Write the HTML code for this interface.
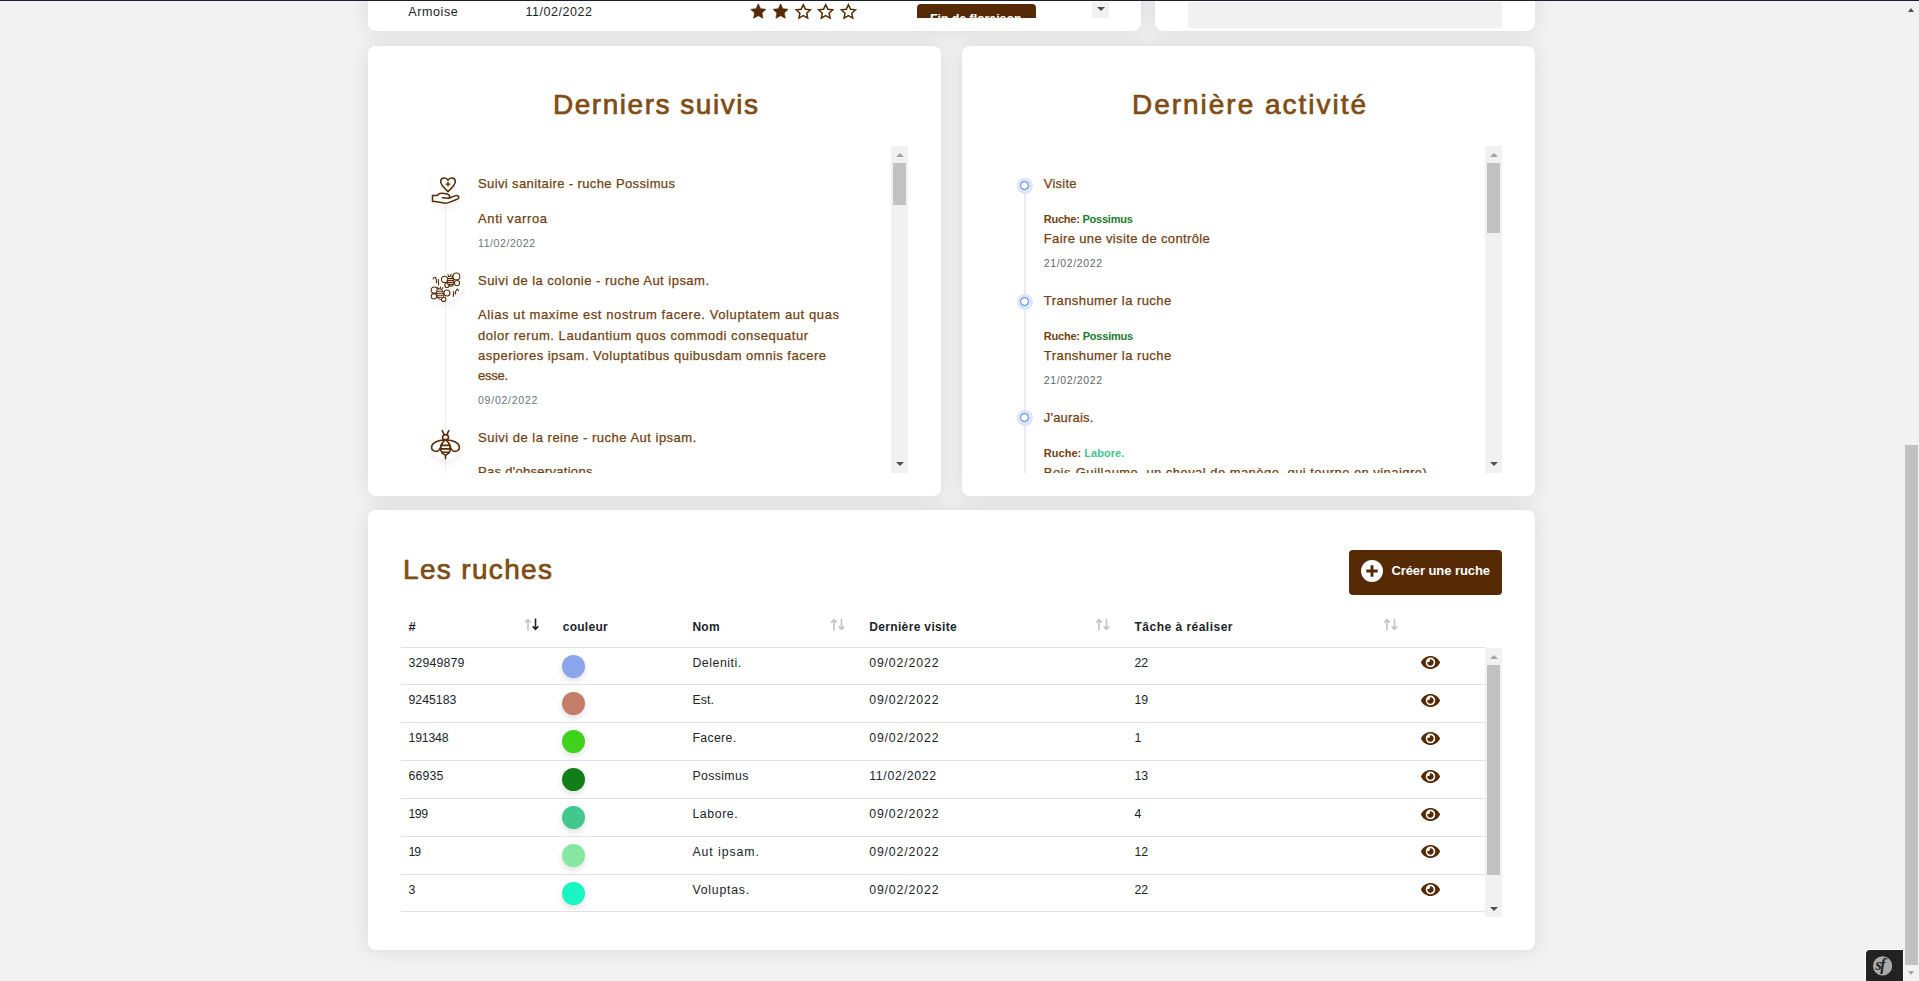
<!DOCTYPE html>
<html lang="fr">
<head>
<meta charset="utf-8">
<title>Tableau de bord - ruches</title>
<style>
html,body{margin:0;padding:0}
body{width:1919px;height:981px;overflow:hidden;position:relative;background:#f2f2f2;font-family:"Liberation Sans",sans-serif}
.a{position:absolute}
.t{position:absolute;white-space:nowrap}
.card{position:absolute;background:#fff;border-radius:8px;box-shadow:0 0 20px rgba(0,0,0,0.10)}
.clip{position:absolute;left:0;top:0;width:1919px;height:981px}
.sb{position:absolute;background:#f1f1f1}
.thumb{position:absolute;background:#c1c1c1}
.up{position:absolute;width:0;height:0;border-left:4px solid transparent;border-right:4px solid transparent;border-bottom:4px solid #a3a3a3}
.dn{position:absolute;width:0;height:0;border-left:4px solid transparent;border-right:4px solid transparent;border-top:4px solid #505050}
.ico{position:absolute;width:30px;height:30px;border-radius:50%;background:#fff;box-shadow:0 3px 8px rgba(0,0,0,0.07)}
.dot{position:absolute;width:16px;height:16px;border-radius:50%;background:#dce6fb}
.dot i{position:absolute;left:3px;top:3px;width:7px;height:7px;border-radius:50%;border:1.5px solid #3b7cf4;background:#fff}
.rb{position:absolute;left:401px;width:1084px;height:1px;background:#dee2e6}
.cc{position:absolute;left:562px;width:23px;height:23px;border-radius:50%;box-shadow:0 3px 6px rgba(0,0,0,0.13)}
.eye{position:absolute;left:1421px;width:19px;height:13px}
.sort{position:absolute;width:16px;height:13px}
</style>
</head>
<body>
<!-- top partial cards -->
<div class="card" style="left:368px;top:-200px;width:773px;height:231px"></div>
<div class="card" style="left:1155px;top:-200px;width:380px;height:231px"></div>
<div class="a" style="left:1188px;top:2px;width:314px;height:26px;background:#f1f1f1"></div>

<!-- stars -->
<svg class="a" style="left:740px;top:0px" width="125" height="24" viewBox="740 0 125 24">
<path d="M758.30,3.80 L760.59,8.64 L765.91,9.33 L762.01,13.01 L763.00,18.27 L758.30,15.70 L753.60,18.27 L754.59,13.01 L750.69,9.33 L756.01,8.64Z" fill="#562a04" stroke="#562a04" stroke-width="0.6" stroke-linejoin="round"/>
<path d="M780.60,3.80 L782.89,8.64 L788.21,9.33 L784.31,13.01 L785.30,18.27 L780.60,15.70 L775.90,18.27 L776.89,13.01 L772.99,9.33 L778.31,8.64Z" fill="#562a04" stroke="#562a04" stroke-width="0.6" stroke-linejoin="round"/>
<path d="M803.30,4.70 L805.42,9.19 L810.34,9.81 L806.72,13.21 L807.65,18.09 L803.30,15.70 L798.95,18.09 L799.88,13.21 L796.26,9.81 L801.18,9.19Z" fill="none" stroke="#562a04" stroke-width="1.5" stroke-linejoin="miter"/>
<path d="M825.70,4.70 L827.82,9.19 L832.74,9.81 L829.12,13.21 L830.05,18.09 L825.70,15.70 L821.35,18.09 L822.28,13.21 L818.66,9.81 L823.58,9.19Z" fill="none" stroke="#562a04" stroke-width="1.5" stroke-linejoin="miter"/>
<path d="M848.40,4.70 L850.52,9.19 L855.44,9.81 L851.82,13.21 L852.75,18.09 L848.40,15.70 L844.05,18.09 L844.98,13.21 L841.36,9.81 L846.28,9.19Z" fill="none" stroke="#562a04" stroke-width="1.5" stroke-linejoin="miter"/>
</svg>

<!-- Fin de floraison button (clipped) -->
<div class="clip" style="clip-path:inset(0 0 963px 0)">
  <div class="a" style="left:917px;top:4px;width:119px;height:30px;background:#562a04;border-radius:4px"></div>
  <div class="t" style="left:930px;top:13px;font-size:12.5px;line-height:13px;font-weight:bold;color:#fff;letter-spacing:-0.1px">Fin de floraison</div>
</div>
<div class="sb" style="left:1092px;top:2px;width:17px;height:16px"></div>
<div class="dn" style="left:1096.5px;top:7px"></div>

<!-- Derniers suivis card -->
<div class="card" style="left:368px;top:46px;width:573px;height:450px"></div>
<div class="clip" style="clip-path:inset(146px 1011px 508px 368px)">
  <div class="a" style="left:445px;top:190px;width:1px;height:290px;background:#eceef1"></div>
  <div class="ico" style="left:430.5px;top:175px"></div>
  <div class="ico" style="left:430.5px;top:272px"></div>
  <div class="ico" style="left:430.5px;top:430px"></div>
  <svg class="a" style="left:420px;top:165px" width="55" height="50" viewBox="0 0 55 50" fill="none" stroke="#5a2c08" stroke-width="1.5" stroke-linejoin="round" stroke-linecap="round">
  <path d="M28 15.3C26.6 12.2 21.2 11.9 20.6 16.3C20.3 19.5 24 23 28 26.6C32 23 35.7 19.5 35.4 16.3C34.8 11.9 29.4 12.2 28 15.3Z"/>
  <path d="M28 17.1V21.1M26 19.1H30" stroke-width="1.4"/>
  <path d="M12.5 30.5H17.2C18.4 29 19.6 28.3 21.5 28.3C23.6 28.3 27.6 28.7 29.3 30.5C30.1 31.4 29.6 33 28.6 33.2L22.3 32.8"/>
  <path d="M28.6 33.2L35.6 30.6C37.4 30 38.9 31.4 38.8 32.7C38.6 33.9 37.2 34.5 35.8 34.8L28.7 37.6C27.1 38.2 25.6 38.4 24 38.1L15.4 36.4H12.5V30.5"/>
</svg>
<svg class="a" style="left:420px;top:262px" width="55" height="50" viewBox="0 0 55 50" fill="#fff" stroke="#5a2c08" stroke-width="1.05" stroke-linejoin="round" stroke-linecap="round">
  <circle cx="24.6" cy="17.4" r="3.1"/>
  <circle cx="27" cy="23.2" r="2.3"/>
  <circle cx="36.4" cy="14.4" r="3.4"/>
  <circle cx="37" cy="21.1" r="2.6"/>
  <ellipse cx="30.5" cy="19.3" rx="3.2" ry="5.1" transform="rotate(-12 30.5 19.3)"/>
  <path d="M27.8 16.6H33.4M27.4 18.6H33.6M27.5 20.6H33.5M28 22.6H33" fill="none"/>
  <path d="M28.6 14.4L27.9 12.4M30.6 14L31 12M32.3 14.6L33.3 12.8" fill="none"/>
  <circle cx="14.3" cy="28" r="3.1"/>
  <circle cx="14" cy="34.3" r="2.7"/>
  <circle cx="27" cy="30.9" r="3"/>
  <circle cx="23.6" cy="37.2" r="2.3"/>
  <ellipse cx="20" cy="32" rx="3.4" ry="5.3" transform="rotate(-12 20 32)"/>
  <path d="M17.2 29.2H23M16.7 31.2H23.3M16.8 33.2H23.2M17.3 35.2H22.7" fill="none"/>
  <path d="M18.2 27L17.6 25.2M20.2 26.7L20.5 24.9M21.9 27.2L22.9 25.6" fill="none"/>
  <path d="M13.1 16.9C13.4 15.3 15.4 14.8 16 16.4C16.4 17.6 16.3 19.4 16.5 20.6" fill="none" stroke-width="1.15"/>
  <path d="M18.4 17.6L18.6 23" fill="none" stroke-width="1.15"/>
  <path d="M33.3 34.4L33.7 29.6M35.3 32C35.6 30 36.2 27.4 37 27.2C37.6 27.1 38.2 28 38.6 28.7" fill="none" stroke-width="1.15"/>
</svg>
<svg class="a" style="left:420px;top:420px" width="55" height="50" viewBox="0 0 55 50" fill="none" stroke="#5a2c08" stroke-width="1.6" stroke-linejoin="round" stroke-linecap="round">
  <path d="M22.2 10.6L24.3 14.9M28.8 10.6L26.7 14.9"/>
  <ellipse cx="25.5" cy="17.3" rx="3" ry="2.6"/>
  <path d="M25.5 19.9C22 22.3 20.4 26 20.6 28.9C20.9 32 23.4 34.4 25.5 35C27.6 34.4 30.1 32 30.4 28.9C30.6 26 29 22.3 25.5 19.9Z"/>
  <path d="M22.6 25.4H28.4M20.8 28.9H30.2M21.9 32.3H29.1"/>
  <path d="M25.5 35V38.7"/>
  <path d="M24 20C19 20.2 12.2 22.3 11.6 27C11.3 30.4 14.8 32 17.8 31C19.8 30.2 21.2 26.5 22.5 23"/>
  <path d="M27 20C32 20.2 38.8 22.3 39.4 27C39.7 30.4 36.2 32 33.2 31C31.2 30.2 29.8 26.5 28.5 23"/>
</svg>

  <div class="t" style="left:478.00px;top:176.99px;font-size:13px;line-height:13px;font-weight:normal;color:#724213;letter-spacing:0.388px;-webkit-text-stroke:0.25px #724213">Suivi sanitaire - ruche Possimus</div>
<div class="t" style="left:478.00px;top:211.99px;font-size:13px;line-height:13px;font-weight:normal;color:#724213;letter-spacing:0.613px;-webkit-text-stroke:0.25px #724213">Anti varroa</div>
<div class="t" style="left:478.00px;top:237.71px;font-size:10.5px;line-height:10.5px;font-weight:normal;color:#6c757d;letter-spacing:0.580px;">11/02/2022</div>
<div class="t" style="left:478.00px;top:273.79px;font-size:13px;line-height:13px;font-weight:normal;color:#724213;letter-spacing:0.482px;-webkit-text-stroke:0.25px #724213">Suivi de la colonie - ruche Aut ipsam.</div>
<div class="t" style="left:478.00px;top:307.99px;font-size:13px;line-height:13px;font-weight:normal;color:#724213;letter-spacing:0.597px;-webkit-text-stroke:0.25px #724213">Alias ut maxime est nostrum facere. Voluptatem aut quas</div>
<div class="t" style="left:478.00px;top:328.59px;font-size:13px;line-height:13px;font-weight:normal;color:#724213;letter-spacing:0.533px;-webkit-text-stroke:0.25px #724213">dolor rerum. Laudantium quos commodi consequatur</div>
<div class="t" style="left:478.00px;top:348.99px;font-size:13px;line-height:13px;font-weight:normal;color:#724213;letter-spacing:0.494px;-webkit-text-stroke:0.25px #724213">asperiores ipsam. Voluptatibus quibusdam omnis facere</div>
<div class="t" style="left:478.00px;top:368.99px;font-size:13px;line-height:13px;font-weight:normal;color:#724213;letter-spacing:-0.270px;-webkit-text-stroke:0.25px #724213">esse.</div>
<div class="t" style="left:478.00px;top:395.11px;font-size:10.5px;line-height:10.5px;font-weight:normal;color:#6c757d;letter-spacing:0.760px;">09/02/2022</div>
<div class="t" style="left:478.00px;top:430.89px;font-size:13px;line-height:13px;font-weight:normal;color:#724213;letter-spacing:0.497px;-webkit-text-stroke:0.25px #724213">Suivi de la reine - ruche Aut ipsam.</div>
<div class="t" style="left:478.00px;top:464.99px;font-size:13px;line-height:13px;font-weight:normal;color:#724213;letter-spacing:0.292px;-webkit-text-stroke:0.25px #724213">Pas d'observations</div>
</div>
<div class="sb" style="left:891px;top:146px;width:17px;height:327px"></div>
<div class="thumb" style="left:893px;top:163px;width:13px;height:42px"></div>
<div class="up" style="left:895.5px;top:153px"></div>
<div class="dn" style="left:895.5px;top:462px"></div>

<!-- Derniere activite card -->
<div class="card" style="left:962px;top:46px;width:573px;height:450px"></div>
<div class="clip" style="clip-path:inset(146px 417px 508px 962px)">
  <div class="a" style="left:1024px;top:186px;width:2px;height:300px;background:#e9ecf4"></div>
  <div class="dot" style="left:1017px;top:177.5px"><i></i></div>
  <div class="dot" style="left:1017px;top:294px"><i></i></div>
  <div class="dot" style="left:1017px;top:410px"><i></i></div>
  <div class="t" style="left:1043.80px;top:176.79px;font-size:13px;line-height:13px;font-weight:normal;color:#724213;letter-spacing:0.228px;-webkit-text-stroke:0.25px #724213">Visite</div>
<div class="t" style="left:1043.80px;top:213.69px;font-size:11px;line-height:11px;font-weight:bold;color:#724213;letter-spacing:-0.237px;">Ruche: <span style="color:#1a7d2a">Possimus</span></div>
<div class="t" style="left:1043.80px;top:231.79px;font-size:13px;line-height:13px;font-weight:normal;color:#724213;letter-spacing:0.367px;-webkit-text-stroke:0.25px #724213">Faire une visite de contrôle</div>
<div class="t" style="left:1043.80px;top:257.91px;font-size:10.5px;line-height:10.5px;font-weight:normal;color:#5f666d;letter-spacing:0.626px;">21/02/2022</div>
<div class="t" style="left:1043.80px;top:293.99px;font-size:13px;line-height:13px;font-weight:normal;color:#724213;letter-spacing:0.441px;-webkit-text-stroke:0.25px #724213">Transhumer la ruche</div>
<div class="t" style="left:1043.80px;top:330.89px;font-size:11px;line-height:11px;font-weight:bold;color:#724213;letter-spacing:-0.208px;">Ruche: <span style="color:#1a7d2a">Possimus</span></div>
<div class="t" style="left:1043.80px;top:348.99px;font-size:13px;line-height:13px;font-weight:normal;color:#724213;letter-spacing:0.441px;-webkit-text-stroke:0.25px #724213">Transhumer la ruche</div>
<div class="t" style="left:1043.80px;top:375.11px;font-size:10.5px;line-height:10.5px;font-weight:normal;color:#5f666d;letter-spacing:0.626px;">21/02/2022</div>
<div class="t" style="left:1043.80px;top:410.69px;font-size:13px;line-height:13px;font-weight:normal;color:#724213;letter-spacing:0.198px;-webkit-text-stroke:0.25px #724213">J'aurais.</div>
<div class="t" style="left:1043.80px;top:447.59px;font-size:11px;line-height:11px;font-weight:bold;color:#724213;letter-spacing:0.032px;">Ruche: <span style="color:#41c68b">Labore.</span></div>
<div class="t" style="left:1043.80px;top:465.69px;font-size:13px;line-height:13px;font-weight:normal;color:#724213;letter-spacing:0.453px;-webkit-text-stroke:0.25px #724213">Bois-Guillaume, un cheval de manège, qui tourne en vinaigre)</div>
</div>
<div class="sb" style="left:1485px;top:146px;width:17px;height:327px"></div>
<div class="thumb" style="left:1487px;top:163px;width:13px;height:70px"></div>
<div class="up" style="left:1489.5px;top:153px"></div>
<div class="dn" style="left:1489.5px;top:462px"></div>

<!-- Les ruches card -->
<div class="card" style="left:368px;top:510px;width:1167px;height:440px"></div>
<div class="a" style="left:1349px;top:550px;width:153px;height:45px;background:#562a04;border-radius:4px"></div>
<svg class="a" style="left:1361px;top:560px" width="22" height="22" viewBox="0 0 22 22">
  <circle cx="11" cy="11" r="11" fill="#fff"/>
  <path d="M11 5.3 V16.7 M5.3 11 H16.7" stroke="#562a04" stroke-width="2.9"/>
</svg>
<svg class="sort" style="left:523.5px;top:617.5px" viewBox="0 0 16 13"><path d="M4 12.5V1.8M1.2 4.6L4 1.6L6.8 4.6" stroke="#c2c4c7" stroke-width="1.6" fill="none"/><path d="M11.5 0.5V11.2M8.7 8.4L11.5 11.4L14.3 8.4" stroke="#212529" stroke-width="1.6" fill="none"/></svg>
<svg class="sort" style="left:830px;top:617.5px" viewBox="0 0 16 13"><path d="M4 12.5V1.8M1.2 4.6L4 1.6L6.8 4.6" stroke="#c2c4c7" stroke-width="1.6" fill="none"/><path d="M11.5 0.5V11.2M8.7 8.4L11.5 11.4L14.3 8.4" stroke="#c2c4c7" stroke-width="1.6" fill="none"/></svg>
<svg class="sort" style="left:1094.8px;top:617.5px" viewBox="0 0 16 13"><path d="M4 12.5V1.8M1.2 4.6L4 1.6L6.8 4.6" stroke="#c2c4c7" stroke-width="1.6" fill="none"/><path d="M11.5 0.5V11.2M8.7 8.4L11.5 11.4L14.3 8.4" stroke="#c2c4c7" stroke-width="1.6" fill="none"/></svg>
<svg class="sort" style="left:1382.5px;top:617.5px" viewBox="0 0 16 13"><path d="M4 12.5V1.8M1.2 4.6L4 1.6L6.8 4.6" stroke="#c2c4c7" stroke-width="1.6" fill="none"/><path d="M11.5 0.5V11.2M8.7 8.4L11.5 11.4L14.3 8.4" stroke="#c2c4c7" stroke-width="1.6" fill="none"/></svg>
<svg width="0" height="0" style="position:absolute"><defs><g id="eyeg"><path transform="scale(0.03299 0.03385) translate(0 -64)" fill="#562a04" d="M572.52 241.4C518.29 135.59 410.93 64 288 64S57.68 135.64 3.48 241.41a32.35 32.35 0 0 0 0 29.19C57.710 376.41 165.07 448 288 448s230.320-71.64 284.520-177.41a32.35 32.35 0 0 0 0-29.19zM288 400a144 144 0 1 1 144-144 143.93 143.93 0 0 1-144 144zm0-240a95.31 95.31 0 0 0-25.31 3.79 47.85 47.85 0 0 1-66.9 66.9A95.78 95.78 0 1 0 288 160z"/></g></defs></svg>
<div class="rb" style="top:647px"></div>
<div class="rb" style="top:684.4px"></div>
<div class="cc" style="top:654.5px;background:#8aa5ec"></div>
<svg class="eye" style="top:656.3px" viewBox="0 0 19 13"><use href="#eyeg"/></svg>
<div class="rb" style="top:722.2px"></div>
<div class="cc" style="top:692.3px;background:#c47d68"></div>
<svg class="eye" style="top:694.1px" viewBox="0 0 19 13"><use href="#eyeg"/></svg>
<div class="rb" style="top:760.1px"></div>
<div class="cc" style="top:730.2px;background:#40d21a"></div>
<svg class="eye" style="top:732.0px" viewBox="0 0 19 13"><use href="#eyeg"/></svg>
<div class="rb" style="top:797.9px"></div>
<div class="cc" style="top:768.0px;background:#127e17"></div>
<svg class="eye" style="top:769.8px" viewBox="0 0 19 13"><use href="#eyeg"/></svg>
<div class="rb" style="top:835.7px"></div>
<div class="cc" style="top:805.8px;background:#42c78d"></div>
<svg class="eye" style="top:807.6px" viewBox="0 0 19 13"><use href="#eyeg"/></svg>
<div class="rb" style="top:873.5px"></div>
<div class="cc" style="top:843.6px;background:#86e8a0"></div>
<svg class="eye" style="top:845.4px" viewBox="0 0 19 13"><use href="#eyeg"/></svg>
<div class="rb" style="top:911.4px"></div>
<div class="cc" style="top:881.5px;background:#17f5c3"></div>
<svg class="eye" style="top:883.3px" viewBox="0 0 19 13"><use href="#eyeg"/></svg>
<div class="sb" style="left:1485px;top:648px;width:17px;height:269px"></div>
<div class="thumb" style="left:1487px;top:665px;width:13px;height:210px"></div>
<div class="up" style="left:1489.5px;top:655px"></div>
<div class="dn" style="left:1489.5px;top:907px"></div>

<div class="t" style="left:408.30px;top:5.52px;font-size:12.5px;line-height:12.5px;font-weight:normal;color:#212529;letter-spacing:0.609px;">Armoise</div>
<div class="t" style="left:525.50px;top:5.52px;font-size:12.5px;line-height:12.5px;font-weight:normal;color:#212529;letter-spacing:0.540px;">11/02/2022</div>
<div class="t" style="left:553.00px;top:90.99px;font-size:28px;line-height:28px;font-weight:normal;color:#7f4c14;letter-spacing:1.528px;-webkit-text-stroke:0.7px #7f4c14">Derniers suivis</div>
<div class="t" style="left:1132.00px;top:90.99px;font-size:28px;line-height:28px;font-weight:normal;color:#7f4c14;letter-spacing:1.980px;-webkit-text-stroke:0.7px #7f4c14">Dernière activité</div>
<div class="t" style="left:403.00px;top:555.59px;font-size:28px;line-height:28px;font-weight:normal;color:#7f4c14;letter-spacing:1.337px;-webkit-text-stroke:0.7px #7f4c14">Les ruches</div>
<div class="t" style="left:1391.40px;top:564.29px;font-size:13px;line-height:13px;font-weight:bold;color:#ffffff;letter-spacing:-0.079px;">Créer une ruche</div>
<div class="t" style="left:408.50px;top:619.99px;font-size:13px;line-height:13px;font-weight:bold;color:#212529;letter-spacing:0.000px;">#</div>
<div class="t" style="left:562.70px;top:620.84px;font-size:12px;line-height:12px;font-weight:bold;color:#212529;letter-spacing:0.276px;">couleur</div>
<div class="t" style="left:692.40px;top:620.84px;font-size:12px;line-height:12px;font-weight:bold;color:#212529;letter-spacing:0.314px;">Nom</div>
<div class="t" style="left:869.20px;top:620.84px;font-size:12px;line-height:12px;font-weight:bold;color:#212529;letter-spacing:0.349px;">Dernière visite</div>
<div class="t" style="left:1134.50px;top:620.84px;font-size:12px;line-height:12px;font-weight:bold;color:#212529;letter-spacing:0.484px;">Tâche à réaliser</div>
<div class="t" style="left:408.50px;top:656.59px;font-size:12.3px;line-height:12.3px;font-weight:normal;color:#212529;letter-spacing:0.169px;">32949879</div>
<div class="t" style="left:692.40px;top:656.59px;font-size:12.3px;line-height:12.3px;font-weight:normal;color:#212529;letter-spacing:0.558px;">Deleniti.</div>
<div class="t" style="left:869.20px;top:656.59px;font-size:12.3px;line-height:12.3px;font-weight:normal;color:#212529;letter-spacing:0.861px;">09/02/2022</div>
<div class="t" style="left:1134.50px;top:656.59px;font-size:12.3px;line-height:12.3px;font-weight:normal;color:#212529;letter-spacing:0.000px;">22</div>
<div class="t" style="left:408.50px;top:694.42px;font-size:12.3px;line-height:12.3px;font-weight:normal;color:#212529;letter-spacing:-0.013px;">9245183</div>
<div class="t" style="left:692.40px;top:694.42px;font-size:12.3px;line-height:12.3px;font-weight:normal;color:#212529;letter-spacing:0.104px;">Est.</div>
<div class="t" style="left:869.20px;top:694.42px;font-size:12.3px;line-height:12.3px;font-weight:normal;color:#212529;letter-spacing:0.861px;">09/02/2022</div>
<div class="t" style="left:1134.50px;top:694.42px;font-size:12.3px;line-height:12.3px;font-weight:normal;color:#212529;letter-spacing:0.000px;">19</div>
<div class="t" style="left:408.50px;top:732.25px;font-size:12.3px;line-height:12.3px;font-weight:normal;color:#212529;letter-spacing:-0.209px;">191348</div>
<div class="t" style="left:692.40px;top:732.25px;font-size:12.3px;line-height:12.3px;font-weight:normal;color:#212529;letter-spacing:0.349px;">Facere.</div>
<div class="t" style="left:869.20px;top:732.25px;font-size:12.3px;line-height:12.3px;font-weight:normal;color:#212529;letter-spacing:0.861px;">09/02/2022</div>
<div class="t" style="left:1134.50px;top:732.25px;font-size:12.3px;line-height:12.3px;font-weight:normal;color:#212529;letter-spacing:0.000px;">1</div>
<div class="t" style="left:408.50px;top:770.08px;font-size:12.3px;line-height:12.3px;font-weight:normal;color:#212529;letter-spacing:0.149px;">66935</div>
<div class="t" style="left:692.40px;top:770.08px;font-size:12.3px;line-height:12.3px;font-weight:normal;color:#212529;letter-spacing:0.370px;">Possimus</div>
<div class="t" style="left:869.20px;top:770.08px;font-size:12.3px;line-height:12.3px;font-weight:normal;color:#212529;letter-spacing:0.707px;">11/02/2022</div>
<div class="t" style="left:1134.50px;top:770.08px;font-size:12.3px;line-height:12.3px;font-weight:normal;color:#212529;letter-spacing:0.000px;">13</div>
<div class="t" style="left:408.50px;top:807.91px;font-size:12.3px;line-height:12.3px;font-weight:normal;color:#212529;letter-spacing:-0.466px;">199</div>
<div class="t" style="left:692.40px;top:807.91px;font-size:12.3px;line-height:12.3px;font-weight:normal;color:#212529;letter-spacing:0.597px;">Labore.</div>
<div class="t" style="left:869.20px;top:807.91px;font-size:12.3px;line-height:12.3px;font-weight:normal;color:#212529;letter-spacing:0.861px;">09/02/2022</div>
<div class="t" style="left:1134.50px;top:807.91px;font-size:12.3px;line-height:12.3px;font-weight:normal;color:#212529;letter-spacing:0.000px;">4</div>
<div class="t" style="left:408.50px;top:845.74px;font-size:12.3px;line-height:12.3px;font-weight:normal;color:#212529;letter-spacing:-0.988px;">19</div>
<div class="t" style="left:692.40px;top:845.74px;font-size:12.3px;line-height:12.3px;font-weight:normal;color:#212529;letter-spacing:0.934px;">Aut ipsam.</div>
<div class="t" style="left:869.20px;top:845.74px;font-size:12.3px;line-height:12.3px;font-weight:normal;color:#212529;letter-spacing:0.861px;">09/02/2022</div>
<div class="t" style="left:1134.50px;top:845.74px;font-size:12.3px;line-height:12.3px;font-weight:normal;color:#212529;letter-spacing:0.000px;">12</div>
<div class="t" style="left:408.50px;top:883.57px;font-size:12.3px;line-height:12.3px;font-weight:normal;color:#212529;letter-spacing:0.000px;">3</div>
<div class="t" style="left:692.40px;top:883.57px;font-size:12.3px;line-height:12.3px;font-weight:normal;color:#212529;letter-spacing:0.776px;">Voluptas.</div>
<div class="t" style="left:869.20px;top:883.57px;font-size:12.3px;line-height:12.3px;font-weight:normal;color:#212529;letter-spacing:0.861px;">09/02/2022</div>
<div class="t" style="left:1134.50px;top:883.57px;font-size:12.3px;line-height:12.3px;font-weight:normal;color:#212529;letter-spacing:0.000px;">22</div>

<!-- page scrollbar -->
<div class="a" style="left:1904px;top:0;width:15px;height:981px;background:#f2f2f2"></div>
<div class="thumb" style="left:1905px;top:445px;width:13px;height:520px"></div>
<div class="a" style="left:1908px;top:8px;width:0;height:0;border-left:3.5px solid transparent;border-right:3.5px solid transparent;border-bottom:4px solid #505050"></div>
<div class="a" style="left:1908px;top:971px;width:0;height:0;border-left:3.5px solid transparent;border-right:3.5px solid transparent;border-top:4px solid #a3a3a3"></div>

<!-- symfony toolbar -->
<div class="a" style="left:1865px;top:949px;width:39px;height:40px;background:#fff;border-radius:5px 0 0 0"></div>
<div class="a" style="left:1866px;top:950px;width:37px;height:40px;background:#222;border-radius:4px 0 0 0"></div>
<svg class="a" style="left:1873px;top:956px" width="20" height="20" viewBox="0 0 20 20">
  <circle cx="9.6" cy="9.9" r="9.6" fill="#aaa"/>
  <text x="2.6" y="14.2" font-family="Liberation Serif" font-style="italic" font-weight="bold" font-size="16" fill="#222" letter-spacing="-1.6">sf</text>
</svg>

<!-- top dark line -->
<div class="a" style="left:0;top:0;width:1919px;height:1px;background:#1c1f2e"></div>
</body>
</html>
